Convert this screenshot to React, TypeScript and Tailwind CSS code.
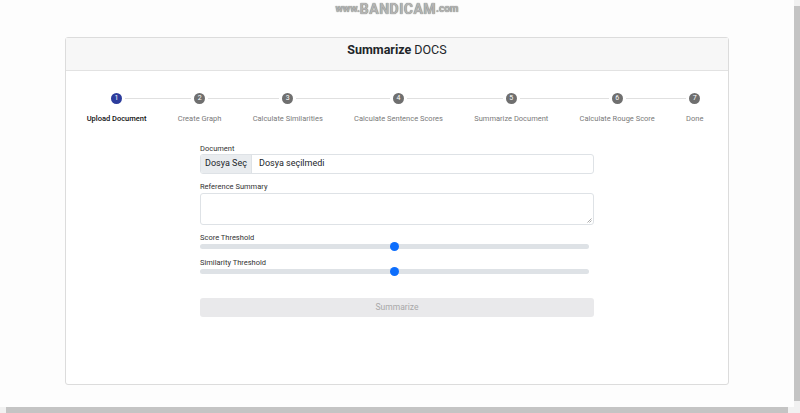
import React from 'react';

const steps = [
  'Upload Document',
  'Create Graph',
  'Calculate Similarities',
  'Calculate Sentence Scores',
  'Summarize Document',
  'Calculate Rouge Score',
  'Done',
];

const Slider: React.FC<{ label: string; className?: string }> = ({ label, className }) => (
  <div className={className}>
    <div className="text-[7.5px] leading-[8px] text-[#333]">{label}</div>
    <div className="relative w-[389px] h-[9px] flex items-center">
      <div className="w-full h-[5px] rounded-full bg-[#dee2e6]"></div>
      <div className="absolute left-[190px] top-0 w-[9px] h-[9px] rounded-full bg-[#0d6efd]"></div>
    </div>
  </div>
);

const App: React.FC = () => {
  const active = 0;

  return (
    <div className="w-[800px] h-[413px] flex flex-col bg-[#fdfdfd] overflow-hidden font-['Roboto',sans-serif]">
      <div className="flex flex-1 min-h-0">
        <div className="flex-1 flex flex-col">
          <div className="h-[17px] flex items-center justify-center text-[#b4b4b4] font-bold [text-shadow:0_0_1px_#555]">
            <span className="text-[10px] leading-none">www.</span>
            <span className="text-[14px] leading-none tracking-[0.5px]">BANDICAM</span>
            <span className="text-[10px] leading-none">.com</span>
          </div>

          <div className="mx-[65px] mt-[20px] h-[348px] border border-[#dcdcdc] rounded-[3px] bg-white flex flex-col">
            <div className="h-[33px] pt-[5px] bg-[#f7f7f7] border-b border-[#e2e2e2] text-center text-[12.5px] leading-[14px] text-[#212529]">
              <span className="font-bold">Summarize</span>
              <span className="ml-[3px]">DOCS</span>
            </div>

            <div className="flex pl-[5px] pr-[9px] pt-[22px]">
              {steps.map((s, i) => (
                <div key={s} className="flex-auto flex flex-col items-center">
                  <div className="w-full flex items-center h-[11px]">
                    <div className={`flex-1 h-px ${i === 0 ? '' : 'bg-[#e0e0e0]'}`}></div>
                    <div
                      className={`mx-[3px] w-[11px] h-[11px] rounded-full flex items-center justify-center text-[7px] leading-none text-white ${
                        i === active ? 'bg-[#2c3c9c]' : 'bg-[#6f6f6f]'
                      }`}
                    >
                      {i + 1}
                    </div>
                    <div className={`flex-1 h-px ${i === steps.length - 1 ? '' : 'bg-[#e0e0e0]'}`}></div>
                  </div>
                  <div
                    className={`mt-[10px] text-[7.5px] leading-[10px] whitespace-nowrap ${
                      i === active ? 'text-[#111] font-medium' : 'text-[#7a7a7a]'
                    }`}
                  >
                    {s}
                  </div>
                </div>
              ))}
            </div>

            <div className="w-[394px] mx-auto mt-[20px] flex flex-col">
              <div className="text-[7.5px] leading-[10px] text-[#333]">Document</div>
              <div className="h-[20px] flex border border-[#dee2e6] rounded-[3px] overflow-hidden text-[9px] text-[#212529]">
                <div className="w-[51px] bg-[#e9ecef] border-r border-[#dee2e6] flex items-center justify-center">
                  Dosya Seç
                </div>
                <div className="flex items-center pl-[7px]">Dosya seçilmedi</div>
              </div>

              <div className="mt-[8px] text-[7.5px] leading-[10px] text-[#333]">Reference Summary</div>
              <div className="mt-[1px] relative h-[32px] border border-[#dee2e6] rounded-[3px] bg-white">
                <svg className="absolute right-[1px] bottom-[1px]" width="5" height="5" viewBox="0 0 5 5">
                  <path d="M4.5 0.5 L0.5 4.5 M4.5 2.5 L2.5 4.5" stroke="#888" strokeWidth="0.7" />
                </svg>
              </div>

              <Slider label="Score Threshold" className="mt-[9px]" />
              <Slider label="Similarity Threshold" className="mt-[8px]" />

              <div className="mt-[22px] h-[19px] rounded-[3px] bg-[#e9e9eb] flex items-center justify-center text-[8.5px] text-[#a8a8a8]">
                Summarize
              </div>
            </div>
          </div>
        </div>

        <div className="w-[6px] flex flex-col bg-[#f1f1f1]">
          <div className="h-[6px]"></div>
          <div className="flex-1 bg-[#c4c4c4]"></div>
          <div className="h-[6px]"></div>
        </div>
      </div>
      <div className="h-[6px] flex bg-[#f1f1f1]">
        <div className="w-[6px]"></div>
        <div className="flex-1 bg-[#c4c4c4]"></div>
        <div className="w-[12px]"></div>
      </div>
    </div>
  );
};

export default App;
